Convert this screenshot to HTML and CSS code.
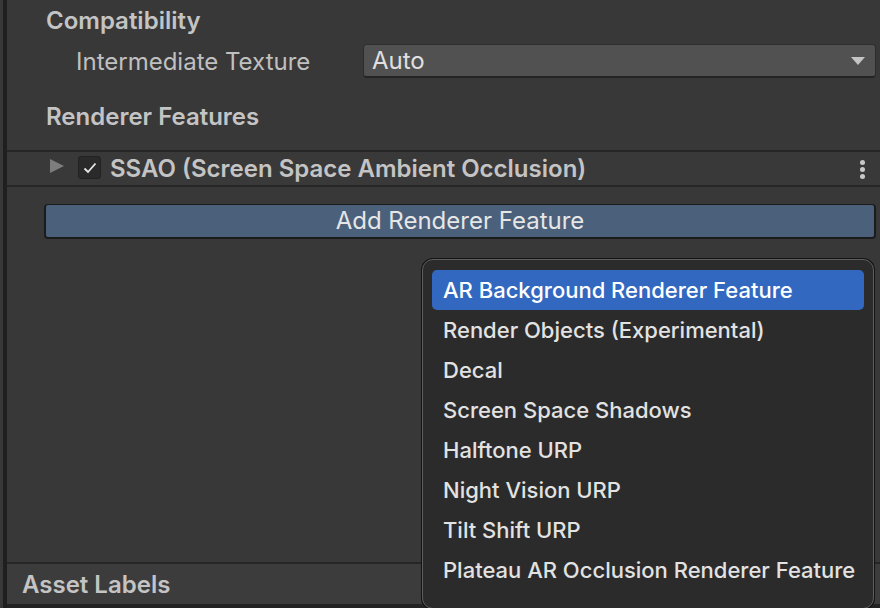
FILE: index.html
```html
<!DOCTYPE html>
<html>
<head>
<meta charset="utf-8">
<link rel="stylesheet" href="styles.css">
</head>
<body>
<div class="window">
  <div class="edge"></div>
  <div class="inspector">
    <div class="content">
      <div class="header">Compatibility</div>
      <div class="field">
        <div class="label">Intermediate Texture</div>
        <div class="dropdown">
          <span>Auto</span>
          <svg class="arrow" width="14" height="9" viewBox="0 0 14 9"><path d="M0 0H14L7 8Z" fill="#c4c4c4"/></svg>
        </div>
      </div>
      <div class="header features">Renderer Features</div>
      <div class="feature-row">
        <svg class="fold" width="16" height="16" viewBox="0 0 16 16"><path d="M1 1L15 8L1 15Z" fill="#7d7d7d"/></svg>
        <div class="checkbox">
          <svg width="14" height="12" viewBox="0 0 14 12"><path d="M1.5 6.5L5 10L12.5 1.5" fill="none" stroke="#e8e8e8" stroke-width="1.8"/></svg>
        </div>
        <div class="feature-name">SSAO (Screen Space Ambient Occlusion)</div>
        <div class="kebab"><i></i><i></i><i></i></div>
      </div>
      <div class="btn-wrap">
        <div class="add-btn">Add Renderer Feature</div>
      </div>
    </div>
    <div class="labels">Asset Labels</div>
    <div class="bottom"></div>
  </div>
  <div class="menu">
    <div class="item selected">AR Background Renderer Feature</div>
    <div class="item">Render Objects (Experimental)</div>
    <div class="item">Decal</div>
    <div class="item">Screen Space Shadows</div>
    <div class="item">Halftone URP</div>
    <div class="item">Night Vision URP</div>
    <div class="item">Tilt Shift URP</div>
    <div class="item">Plateau AR Occlusion Renderer Feature</div>
  </div>
</div>
</body>
</html>
```
FILE: styles.css
```css
html, body {
  margin: 0;
  padding: 0;
  background: #383838;
}
body {
  font-family: Inter, "Noto Sans", sans-serif;
  font-size: 24px;
  color: #c4c4c4;
}
.window {
  position: relative;
  width: 880px;
  height: 608px;
  display: flex;
  overflow: hidden;
}
.edge {
  width: 3px;
  background: #383838;
  border-right: 4px solid #1f1f1f;
  flex: none;
}
.inspector {
  flex: 1;
  display: flex;
  flex-direction: column;
}
.content {
  flex: 1;
  display: flex;
  flex-direction: column;
}
.header {
  font-weight: 600;
  padding-left: 39px;
  height: 42px;
  line-height: 42px;
}
.field {
  display: flex;
  align-items: center;
  margin-top: 2px;
  height: 34px;
}
.label {
  width: 287px;
  padding-left: 69px;
  flex: none;
  color: #c0c0c0;
}
.dropdown {
  flex: 1;
  margin-right: 4px;
  height: 31px;
  background: #515151;
  border: 1px solid #2c2c2c;
  border-top-color: #303030;
  border-bottom: 2px solid #242424;
  border-radius: 4px;
  display: flex;
  align-items: center;
  justify-content: space-between;
  padding: 0 10px 0 8px;
  color: #e0e0e0;
}
.arrow { margin-top: 1px; }
.features {
  margin-top: 18px;
}
.feature-row {
  margin-top: 12px;
  height: 33px;
  border-top: 2px solid #262626;
  border-bottom: 2px solid #262626;
  display: flex;
  align-items: center;
  padding-left: 42px;
  background: #393939;
}
.fold { margin-top: -5px; }
.checkbox {
  width: 21px;
  height: 21px;
  margin-left: 13px;
  background: #2a2a2a;
  border: 1px solid #222;
  border-radius: 3px;
  display: flex;
  align-items: center;
  justify-content: center;
  margin-top: -2px;
}
.feature-name {
  font-weight: 600;
  margin-left: 9px;
  flex: 1;
}
.kebab {
  width: 6px;
  margin-right: 14px;
  display: flex;
  flex-direction: column;
  gap: 2px;
  margin-top: 2px;
}
.kebab i {
  display: block;
  width: 5px;
  height: 5px;
  border-radius: 50%;
  background: #c8c8c8;
}
.btn-wrap {
  padding: 17px 4px 0 37px;
}
.add-btn {
  height: 32px;
  background: #4b607b;
  border: 2px solid #1b1b1b;
  border-top-width: 1px;
  border-radius: 4px;
  text-align: center;
  line-height: 32px;
  color: #e6e6e6;
}
.labels {
  height: 40px;
  border-top: 2px solid #262626;
  background: #3c3c3c;
  font-weight: 600;
  padding-left: 15px;
  line-height: 41px;
}
.bottom {
  height: 4px;
  background: #232323;
}
.menu {
  position: absolute;
  left: 422px;
  top: 259px;
  width: 432px;
  padding: 10px 9px 18px 9px;
  background: #2b2b2b;
  border: 1px solid #5e5e5e;
  box-shadow: 0 0 0 1px #141414;
  border-radius: 11px;
  display: flex;
  flex-direction: column;
  font-size: 22px;
}
.item {
  height: 40px;
  line-height: 40px;
  padding-left: 11px;
  color: #e2e2e2;
  border-radius: 5px;
  font-weight: 500;
}
.item.selected {
  background: #3268c0;
  color: #ffffff;
}
```
